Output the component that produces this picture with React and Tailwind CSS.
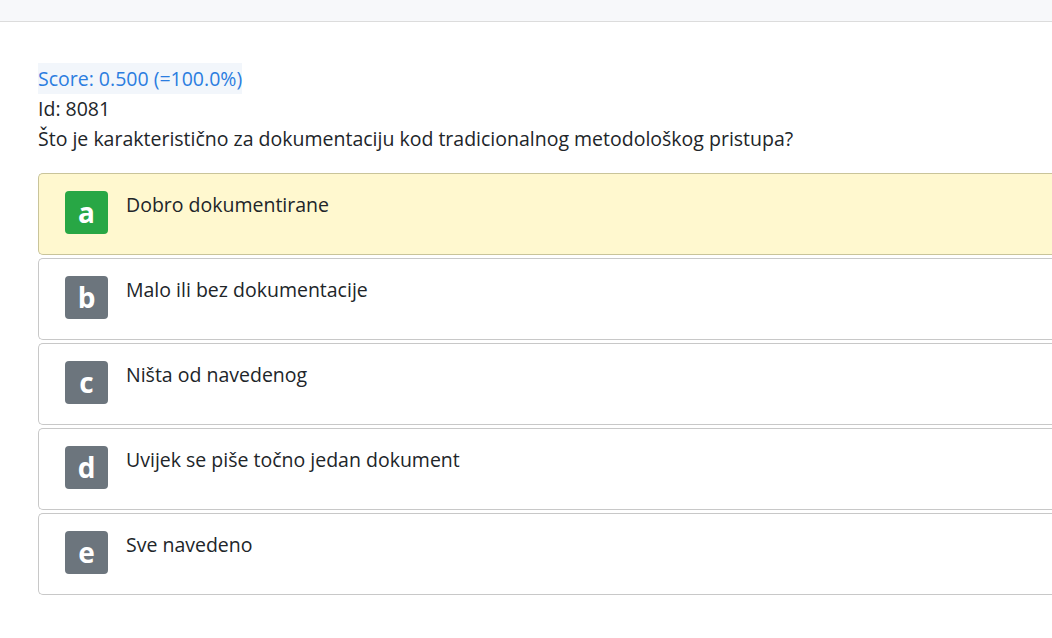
import React from "react";

const answers = [
  { letter: "a", text: "Dobro dokumentirane", correct: true },
  { letter: "b", text: "Malo ili bez dokumentacije" },
  { letter: "c", text: "Ništa od navedenog" },
  { letter: "d", text: "Uvijek se piše točno jedan dokument" },
  { letter: "e", text: "Sve navedeno" },
];

function Answer({ letter, text, correct }) {
  return (
    <div
      className={
        "flex items-start h-[82px] pl-[26px] pt-[17px] rounded-l-[5px] border border-r-0 " +
        (correct ? "bg-[#fff8cf] border-[#c9c49a]" : "bg-white border-[#c8c8c8]")
      }
    >
      <div
        className={
          "w-[43px] h-[43px] rounded-[4px] flex items-center justify-center text-white text-[28px] font-bold leading-none pb-[2px] " +
          (correct ? "bg-[#28a745]" : "bg-[#6c757d]")
        }
      >
        {letter}
      </div>
      <div className="ml-[18px] text-[19.5px] leading-[28px] text-[#212529]">{text}</div>
    </div>
  );
}

export default function App() {
  return (
    <div className="min-h-screen bg-white" style={{ fontFamily: '"Open Sans", "Noto Sans", sans-serif' }}>
      <div className="h-[22px] bg-[#f7f8fa] border-b border-[#dcdcdc]" />
      <div className="pl-[38px] pt-[42px]">
        <div className="text-[19.5px] leading-[30px] text-[#212529]">
          <div>
            <span className="bg-[#f2f6fb] text-[#2b7de0] py-[2px]">Score: 0.500 (=100.0%)</span>
          </div>
          <div>Id: 8081</div>
          <div>Što je karakteristično za dokumentaciju kod tradicionalnog metodološkog pristupa?</div>
        </div>
        <div className="mt-[19px] flex flex-col gap-[3px]">
          {answers.map((a) => (
            <Answer key={a.letter} {...a} />
          ))}
        </div>
      </div>
    </div>
  );
}
